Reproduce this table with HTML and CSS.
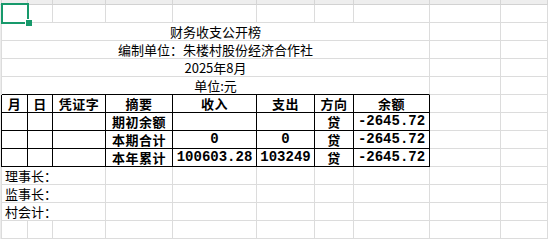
FILE: index.html
```html
<!DOCTYPE html>
<html lang="zh">
<head>
<meta charset="utf-8">
<title>财务收支公开榜</title>
<link rel="stylesheet" href="styles.css">
</head>
<body>
<div class="sheet">
  <!-- header strip -->
  <div class="c h"></div><div class="c h"></div><div class="c h"></div><div class="c h"></div><div class="c h"></div><div class="c h"></div><div class="c h"></div><div class="c h"></div><div class="c h"></div><div class="c h"></div><div class="c h"></div>

  <!-- row 1 -->
  <div class="c s"></div>
  <div class="c sel-cell"><span class="sel"></span><span class="handle"></span></div>
  <div class="c"></div><div class="c"></div><div class="c"></div><div class="c"></div><div class="c"></div><div class="c"></div><div class="c"></div><div class="c"></div><div class="c"></div>

  <!-- row 2 -->
  <div class="c s"></div>
  <div class="c m title">财务收支公开榜</div>
  <div class="c"></div><div class="c"></div>

  <!-- row 3 -->
  <div class="c s"></div>
  <div class="c m title">编制单位：朱楼村股份经济合作社</div>
  <div class="c"></div><div class="c"></div>

  <!-- row 4 -->
  <div class="c s"></div>
  <div class="c m title">2025年8月</div>
  <div class="c"></div><div class="c"></div>

  <!-- row 5 -->
  <div class="c s"></div>
  <div class="c m title top">单位:元</div>
  <div class="c"></div><div class="c"></div>

  <!-- row 6 table header -->
  <div class="c s sb"></div>
  <div class="c t">月</div>
  <div class="c t">日</div>
  <div class="c t">凭证字</div>
  <div class="c t">摘要</div>
  <div class="c t">收入</div>
  <div class="c t">支出</div>
  <div class="c t">方向</div>
  <div class="c t">余额</div>
  <div class="c"></div><div class="c"></div>

  <!-- row 7 -->
  <div class="c s sb"></div>
  <div class="c t"></div>
  <div class="c t"></div>
  <div class="c t"></div>
  <div class="c t">期初余额</div>
  <div class="c t"></div>
  <div class="c t"></div>
  <div class="c t">贷</div>
  <div class="c t n">-2645.72</div>
  <div class="c"></div><div class="c"></div>

  <!-- row 8 -->
  <div class="c s sb"></div>
  <div class="c t"></div>
  <div class="c t"></div>
  <div class="c t"></div>
  <div class="c t">本期合计</div>
  <div class="c t n">0</div>
  <div class="c t n">0</div>
  <div class="c t">贷</div>
  <div class="c t n">-2645.72</div>
  <div class="c"></div><div class="c"></div>

  <!-- row 9 -->
  <div class="c s sb"></div>
  <div class="c t"></div>
  <div class="c t"></div>
  <div class="c t"></div>
  <div class="c t">本年累计</div>
  <div class="c t n">100603.28</div>
  <div class="c t n">103249</div>
  <div class="c t">贷</div>
  <div class="c t n">-2645.72</div>
  <div class="c"></div><div class="c"></div>

  <!-- row 10 -->
  <div class="c s"></div>
  <div class="c m3 sign">理事长：</div>
  <div class="c"></div><div class="c"></div><div class="c"></div><div class="c"></div><div class="c"></div><div class="c"></div><div class="c"></div>

  <!-- row 11 -->
  <div class="c s"></div>
  <div class="c m3 sign">监事长：</div>
  <div class="c"></div><div class="c"></div><div class="c"></div><div class="c"></div><div class="c"></div><div class="c"></div><div class="c"></div>

  <!-- row 12 -->
  <div class="c s"></div>
  <div class="c m3 sign">村会计：</div>
  <div class="c"></div><div class="c"></div><div class="c"></div><div class="c"></div><div class="c"></div><div class="c"></div><div class="c"></div>

  <!-- row 13 -->
  <div class="c s"></div>
  <div class="c"></div><div class="c"></div><div class="c"></div><div class="c"></div><div class="c"></div><div class="c"></div><div class="c"></div><div class="c"></div><div class="c"></div><div class="c"></div>
</div>
</body>
</html>
```

FILE: styles.css
```css
html, body {
  margin: 0;
  padding: 0;
  background: #ffffff;
  overflow: hidden;
}

.sheet {
  display: grid;
  grid-template-columns: 2px 26px 25px 53px 67px 84px 58px 39px 76px 71px 1fr;
  grid-template-rows: 5px repeat(13, 18px);
  width: 548px;
  height: 243px;
  overflow: hidden;
  font-family: "Noto Sans CJK SC", "Noto Sans", sans-serif;
  color: #000;
}

.c {
  box-sizing: border-box;
  border-right: 1px solid #dcdcdc;
  border-bottom: 1px solid #dcdcdc;
  min-width: 0;
  white-space: nowrap;
  font-size: 13px;
  line-height: 17px;
}

.h {
  background: #eeeeee;
  border-right-color: #d6d6d6;
  border-bottom-color: #d2d2d2;
}

.s {
  background: #ececec;
  border-bottom: none;
}

.sb {
  border-right-color: #000;
}

.m {
  grid-column: span 8;
}

.m3 {
  grid-column: span 3;
}

.title {
  text-align: center;
  font-weight: 400;
}

.top {
  border-bottom-color: #000;
}

.t {
  border-right-color: #000;
  border-bottom-color: #000;
  text-align: center;
  font-weight: 700;
  letter-spacing: 0.5px;
}

.n {
  font-family: "Liberation Mono", "DejaVu Sans Mono", monospace;
  font-size: 14px;
  letter-spacing: 0;
}

.sign {
  padding-left: 3px;
}

.sel-cell {
  position: relative;
}

.sel {
  position: absolute;
  left: -1px;
  top: -2px;
  width: 28px;
  height: 21px;
  box-sizing: border-box;
  border: 2px solid #17996b;
}

.handle {
  position: absolute;
  left: 23px;
  top: 14px;
  width: 6px;
  height: 6px;
  background: #17996b;
  border-left: 1px solid #fff;
  border-top: 1px solid #fff;
}
```
